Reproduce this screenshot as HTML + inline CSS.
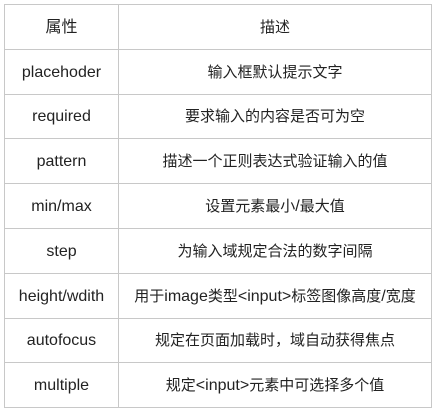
<!DOCTYPE html>
<html><head><meta charset="utf-8"><style>
html,body{margin:0;padding:0;background:#fff;width:437px;height:411px;overflow:hidden}
table{position:absolute;left:4px;top:4px;border-collapse:collapse;font-family:"Liberation Sans","Noto Sans CJK SC",sans-serif;font-size:15px;color:#222}
td{border:1px solid #c8c8c8;height:41.8px;padding:2px 0 0 0;text-align:center;vertical-align:middle;white-space:nowrap;line-height:20px}
td:first-child{width:113px;font-size:16px}
td:last-child{width:312px}
.l{font-size:16px}
</style></head><body>
<table>
<tr><td>属性</td><td>描述</td></tr>
<tr><td>placehoder</td><td>输入框默认提示文字</td></tr>
<tr><td>required</td><td>要求输入的内容是否可为空</td></tr>
<tr><td>pattern</td><td>描述一个正则表达式验证输入的值</td></tr>
<tr><td>min/max</td><td>设置元素最小<span class="l">/</span>最大值</td></tr>
<tr><td>step</td><td>为输入域规定合法的数字间隔</td></tr>
<tr><td>height/wdith</td><td>用于<span class="l">image</span>类型<span class="l">&lt;input&gt;</span>标签图像高度<span class="l">/</span>宽度</td></tr>
<tr><td>autofocus</td><td>规定在页面加载时，域自动获得焦点</td></tr>
<tr><td>multiple</td><td>规定<span class="l">&lt;input&gt;</span>元素中可选择多个值</td></tr>
</table>
</body></html>
